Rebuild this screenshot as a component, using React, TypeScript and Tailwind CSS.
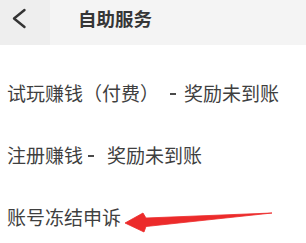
const font = { fontFamily: '"Noto Sans CJK SC", "Noto Sans", sans-serif' };

function Dash({ before, after }: { before: string; after: string }) {
  return (
    <span className={`inline-block ${before} ${after} w-[6px] h-[1.5px] bg-[#4a4a4a] align-[0.32em]`} />
  );
}

export default function App() {
  return (
    <div className="relative w-[306px] h-[243px] bg-white overflow-hidden" style={font}>
      {/* top bar */}
      <header className="flex h-[45px] bg-[#f4f4f4]">
        <div className="w-[50px] h-full bg-[#eeeeee] pl-[12px] pt-[8px]">
          <svg width="16" height="22" viewBox="0 0 16 22" fill="none">
            <polyline
              points="12.5,2 2,10.5 12.5,19"
              stroke="#333"
              strokeWidth="2.4"
              strokeLinecap="round"
              strokeLinejoin="round"
            />
          </svg>
        </div>
        <h1 className="ml-[28px] pt-[8px] text-[18.5px] leading-[20px] font-semibold text-[#363636]">
          自助服务
        </h1>
      </header>

      <ul className="flex flex-col gap-[42px] pt-[38px] pl-[7px] text-[19px] leading-[20px] text-[#3f3f3f]">
        <li className="whitespace-nowrap">
          试玩赚钱（付费）<Dash before="ml-[11px]" after="mr-[8px]" />奖励未到账
        </li>
        <li className="whitespace-nowrap">
          注册赚钱<Dash before="ml-[5px]" after="mr-[13px]" />奖励未到账
        </li>
        <li className="whitespace-nowrap">账号冻结申诉</li>
      </ul>

      {/* red annotation arrow */}
      <svg className="absolute inset-0 pointer-events-none" width="306" height="243" viewBox="0 0 306 243">
        <polygon
          points="125,223 143,213 146,218 272,213 146,226.5 144,232"
          fill="#ec2b2b"
          stroke="#ec2b2b"
          strokeWidth="0.8"
          strokeLinejoin="round"
        />
      </svg>
    </div>
  );
}
